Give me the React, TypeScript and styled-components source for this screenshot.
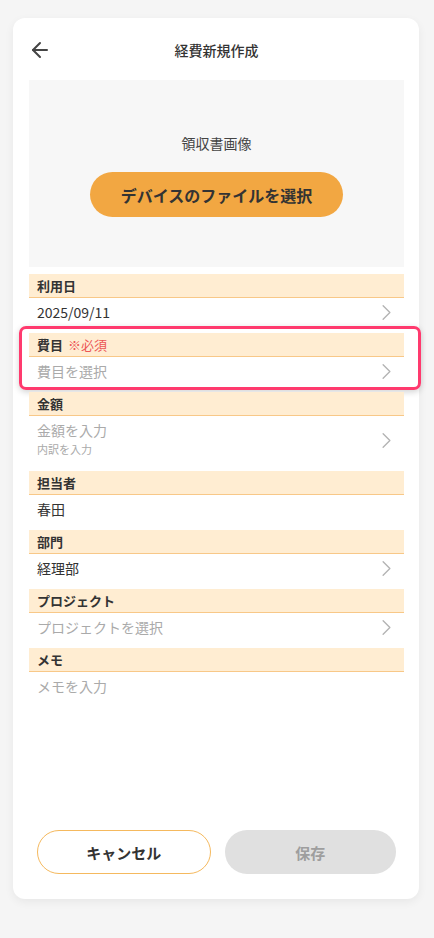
import React from 'react'
import styled, { createGlobalStyle } from 'styled-components'
import { ArrowLeft, ChevronRight } from 'lucide-react'

const GlobalStyle = createGlobalStyle`
  html, body {
    margin: 0;
    padding: 0;
    background: #f5f5f5;
  }
  body {
    font-family: "Noto Sans CJK JP", "Noto Sans", sans-serif;
    color: #333;
  }
  * {
    box-sizing: border-box;
  }
`

type Field = {
  label: string
  value: string
  placeholder?: boolean
  sub?: string
  chevron?: boolean
  required?: boolean
}

const fields: Field[] = [
  { label: '利用日', value: '2025/09/11', chevron: true },
  { label: '費目', value: '費目を選択', placeholder: true, chevron: true, required: true },
  { label: '金額', value: '金額を入力', placeholder: true, sub: '内訳を入力', chevron: true },
  { label: '担当者', value: '春田' },
  { label: '部門', value: '経理部', chevron: true },
  { label: 'プロジェクト', value: 'プロジェクトを選択', placeholder: true, chevron: true },
  { label: 'メモ', value: 'メモを入力', placeholder: true },
]

const FieldBlock = ({ field }: { field: Field }) => (
  <Section $highlight={field.required}>
    <SectionHeader>
      {field.label}
      {field.required && <Required>※必須</Required>}
    </SectionHeader>
    <ValueRow $tall={!!field.sub}>
      <ValueText>
        <Value $placeholder={field.placeholder}>{field.value}</Value>
        {field.sub && <SubValue>{field.sub}</SubValue>}
      </ValueText>
      {field.chevron && <ChevronRight size={27} strokeWidth={1.2} color="#b3b3b3" />}
    </ValueRow>
  </Section>
)

const App = () => {
  return (
    <>
      <GlobalStyle />
      <Page>
        <Card>
          <Content>
            <Header>
              <BackButton>
                <ArrowLeft size={24} strokeWidth={2} color="#444" />
              </BackButton>
              <Title>経費新規作成</Title>
            </Header>
            <ImageArea>
              <ImageLabel>領収書画像</ImageLabel>
              <UploadButton>デバイスのファイルを選択</UploadButton>
            </ImageArea>
            <Fields>
              {fields.map((f) => (
                <FieldBlock key={f.label} field={f} />
              ))}
            </Fields>
            <Spacer />
            <Footer>
              <CancelButton>キャンセル</CancelButton>
              <SaveButton disabled>保存</SaveButton>
            </Footer>
          </Content>
        </Card>
      </Page>
    </>
  )
}

const Page = styled.div`
  width: 434px;
  height: 938px;
  padding: 18px 15px 39px 13px;
`

const Card = styled.div`
  height: 881px;
  background: #fff;
  border-radius: 12px;
  box-shadow: 0 3px 10px rgba(0, 0, 0, 0.06);
  padding: 0 15px 0 16px;
  display: flex;
`

const Content = styled.div`
  flex: 1;
  display: flex;
  flex-direction: column;
`

const Header = styled.div`
  position: relative;
  height: 62px;
  display: flex;
  align-items: center;
  justify-content: center;
`

const BackButton = styled.button`
  position: absolute;
  left: -1px;
  top: 20px;
  padding: 0;
  border: none;
  background: none;
  display: flex;
`

const Title = styled.h1`
  margin: 0;
  font-size: 14px;
  font-weight: 500;
  color: #333;
  padding-top: 2px;
`

const ImageArea = styled.div`
  height: 187px;
  background: #f7f7f7;
  display: flex;
  flex-direction: column;
  align-items: center;
  padding-top: 53px;
`

const ImageLabel = styled.div`
  font-size: 14px;
  line-height: 20px;
  color: #444;
`

const UploadButton = styled.button`
  margin-top: 19px;
  width: 253px;
  height: 45px;
  border: none;
  border-radius: 23px;
  background: #f2a742;
  font-family: inherit;
  font-size: 16px;
  font-weight: 700;
  color: #333;
`

const Fields = styled.div`
  margin-top: 7px;
  display: flex;
  flex-direction: column;
`

const Section = styled.div<{ $highlight?: boolean }>`
  position: relative;
  margin-bottom: 7px;

  ${({ $highlight }) =>
    $highlight &&
    `
    &::after {
      content: "";
      position: absolute;
      top: -7px;
      bottom: -5px;
      left: -10px;
      right: -17px;
      border: 3px solid #ff3a6e;
      border-radius: 7px;
      box-shadow: 0 2px 6px rgba(0, 0, 0, 0.18);
      pointer-events: none;
    }
  `}
`

const SectionHeader = styled.div`
  height: 24px;
  background: #ffedd2;
  border-bottom: 1.5px solid #f8c888;
  padding: 0 8px;
  display: flex;
  align-items: center;
  font-size: 13px;
  font-weight: 700;
  color: #333;
`

const Required = styled.span`
  margin-left: 5px;
  color: #ec5555;
  font-weight: 400;
`

const ValueRow = styled.div<{ $tall?: boolean }>`
  height: ${({ $tall }) => ($tall ? 48 : 28)}px;
  padding: ${({ $tall }) => ($tall ? '4px 4px 0 8px' : '0 4px 0 8px')};
  display: flex;
  align-items: ${({ $tall }) => ($tall ? 'flex-start' : 'center')};
  justify-content: space-between;

  svg {
    align-self: center;
    margin-top: ${({ $tall }) => ($tall ? '-4px' : '0')};
  }
`

const ValueText = styled.div`
  display: flex;
  flex-direction: column;
`

const Value = styled.span<{ $placeholder?: boolean }>`
  font-size: 14px;
  line-height: 20px;
  color: ${({ $placeholder }) => ($placeholder ? '#aaa' : '#333')};
`

const SubValue = styled.span`
  font-size: 11px;
  line-height: 18px;
  color: #aaa;
`

const Spacer = styled.div`
  flex: 1;
`

const Footer = styled.div`
  display: flex;
  gap: 14px;
  padding: 0 8px 25px;
`

const BaseButton = styled.button`
  flex: 1;
  height: 44px;
  border-radius: 22px;
  font-family: inherit;
  font-size: 15px;
  font-weight: 700;
`

const CancelButton = styled(BaseButton)`
  background: #fff;
  border: 1px solid #f5b95e;
  color: #333;
`

const SaveButton = styled(BaseButton)`
  background: #e0e0e0;
  border: none;
  color: #9e9e9e;
`

export default App
